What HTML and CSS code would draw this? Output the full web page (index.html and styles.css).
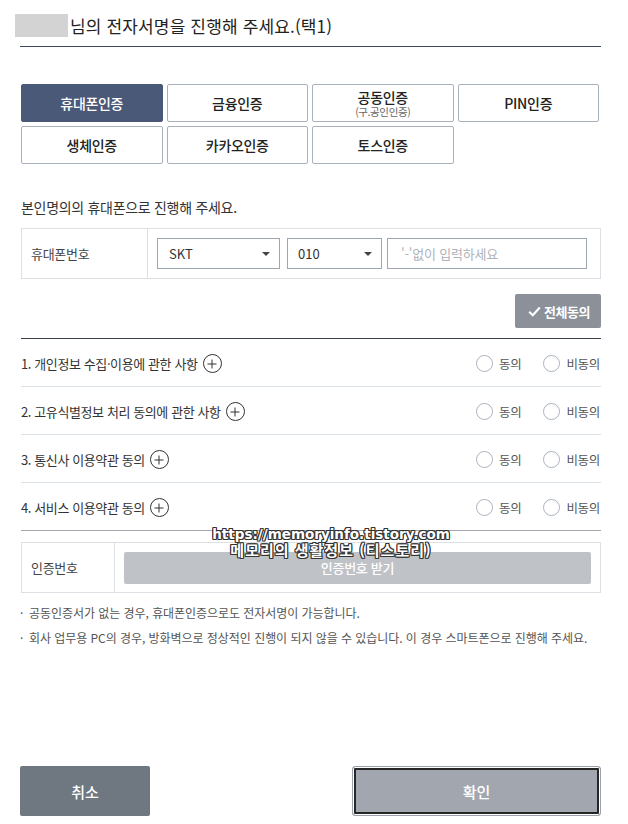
FILE: index.html
```html
<!DOCTYPE html>
<html lang="ko">
<head>
<meta charset="utf-8">
<link rel="stylesheet" href="styles.css">
</head>
<body>
<div class="page">
  <div class="header">
    <span class="mask"></span>
    <h1 class="title">님의 전자서명을 진행해 주세요.(택1)</h1>
  </div>
  <div class="rule"></div>

  <div class="content">
    <div class="tabs">
      <button class="tab active">휴대폰인증</button>
      <button class="tab">금융인증</button>
      <button class="tab two"><span>공동인증</span><small>(구.공인인증)</small></button>
      <button class="tab">PIN인증</button>
      <button class="tab">생체인증</button>
      <button class="tab">카카오인증</button>
      <button class="tab">토스인증</button>
    </div>

    <p class="guide">본인명의의 휴대폰으로 진행해 주세요.</p>

    <div class="phone-box">
      <div class="label">휴대폰번호</div>
      <div class="fields">
        <div class="select sel-carrier"><span>SKT</span><i class="caret"></i></div>
        <div class="select sel-prefix"><span>010</span><i class="caret"></i></div>
        <div class="input">'-'없이 입력하세요</div>
      </div>
    </div>

    <div class="agree-all-row">
      <button class="agree-all">
        <svg width="13" height="11" viewBox="0 0 13 11"><path d="M1.2 5.8 L4.8 9.2 L11.8 1.6" fill="none" stroke="#fff" stroke-width="2.2"/></svg>
        전체동의
      </button>
    </div>

    <div class="terms">
      <div class="term">
        <div class="term-name">1. 개인정보 수집·이용에 관한 사항<span class="plus"></span></div>
        <div class="choices"><span class="radio"></span><span class="opt">동의</span><span class="radio"></span><span class="opt">비동의</span></div>
      </div>
      <div class="term">
        <div class="term-name">2. 고유식별정보 처리 동의에 관한 사항<span class="plus"></span></div>
        <div class="choices"><span class="radio"></span><span class="opt">동의</span><span class="radio"></span><span class="opt">비동의</span></div>
      </div>
      <div class="term">
        <div class="term-name">3. 통신사 이용약관 동의<span class="plus"></span></div>
        <div class="choices"><span class="radio"></span><span class="opt">동의</span><span class="radio"></span><span class="opt">비동의</span></div>
      </div>
      <div class="term">
        <div class="term-name">4. 서비스 이용약관 동의<span class="plus"></span></div>
        <div class="choices"><span class="radio"></span><span class="opt">동의</span><span class="radio"></span><span class="opt">비동의</span></div>
      </div>
    </div>

    <div class="auth-box">
      <div class="label label-auth">인증번호</div>
      <div class="auth-cell"><button class="auth-btn">인증번호 받기</button></div>
    </div>

    <ul class="notes">
      <li>공동인증서가 없는 경우, 휴대폰인증으로도 전자서명이 가능합니다.</li>
      <li>회사 업무용 PC의 경우, 방화벽으로 정상적인 진행이 되지 않을 수 있습니다. 이 경우 스마트폰으로 진행해 주세요.</li>
    </ul>
  </div>

  <div class="footer">
    <button class="btn-cancel">취소</button>
    <button class="btn-ok">확인</button>
  </div>

  <div class="watermark">
    <div>https://memoryinfo.tistory.com</div>
    <div class="wm-ko">메모리의 생활정보 (티스토리)</div>
  </div>
</div>
</body>
</html>
```

FILE: styles.css
```css
* { box-sizing: border-box; }
html, body { margin: 0; padding: 0; background: #fff; }
body {
  font-family: "Noto Sans CJK KR", "Noto Sans", sans-serif;
  color: #222;
}
button { font-family: inherit; cursor: pointer; }

.page {
  position: relative;
  height: 824px;
  display: flex;
  flex-direction: column;
}

.header {
  display: flex;
  align-items: center;
  padding: 14px 0 0 15px;
  height: 37px;
}
.mask {
  display: block;
  width: 53px;
  height: 23px;
  background: #d3d3d3;
}
.title {
  margin: 0 0 0 2px;
  font-size: 17px;
  font-weight: 400;
  letter-spacing: 0.15px;
  color: #222;
  line-height: 23px;
}
.rule {
  margin: 9px 27px 0 20px;
  border-top: 1px solid #3c4560;
}

.content {
  padding: 0 27px 0 21px;
}

.tabs {
  margin-top: 37px;
  display: grid;
  grid-template-columns: repeat(4, 141.5px);
  grid-auto-rows: 38px;
  column-gap: 4px;
  row-gap: 4px;
}
.tab {
  border: 1px solid #a8b1bb;
  border-radius: 2px;
  background: #fff;
  color: #222;
  font-size: 14px;
  font-weight: 500;
  letter-spacing: -0.3px;
  padding: 0;
  display: flex;
  flex-direction: column;
  align-items: center;
  justify-content: center;
}
.tab.active {
  background: #4b5979;
  border-color: #4b5979;
  color: #fff;
}
.tab.two span { display: block; line-height: 15px; height: 15px; margin-top: 1px; }
.tab.two small {
  display: block;
  font-size: 10.5px;
  color: #666;
  line-height: 12px;
  height: 12px;
  margin-top: 1px;
  font-weight: 400;
  letter-spacing: -0.4px;
}

.guide {
  margin: 33px 0 0 0;
  font-size: 14px;
  line-height: 20px;
  color: #333;
  letter-spacing: -0.3px;
}

.phone-box, .auth-box {
  display: flex;
  border: 1px solid #dcdfe4;
  height: 51px;
}
.phone-box { margin-top: 11px; }
.label {
  width: 126px;
  border-right: 1px solid #dcdfe4;
  display: flex;
  align-items: center;
  padding-left: 9px;
  font-size: 13px;
  color: #444;
  letter-spacing: -0.3px;
}
.fields {
  display: flex;
  align-items: center;
  padding-left: 9px;
}
.select, .input {
  height: 31px;
  border: 1px solid #9ea7b1;
  display: flex;
  align-items: center;
  font-size: 13px;
  color: #333;
}
.select {
  justify-content: space-between;
  padding: 0 8px 0 11px;
}
.sel-carrier { width: 123px; }
.sel-prefix { width: 95px; margin-left: 7px; padding-left: 10px; }
.caret {
  width: 0;
  height: 0;
  border-left: 4px solid transparent;
  border-right: 4px solid transparent;
  border-top: 4px solid #444;
  margin-right: 1px;
}
.input {
  width: 200px;
  margin-left: 5px;
  padding-left: 13px;
  color: #aeb3b8;
  letter-spacing: -0.2px;
}

.agree-all-row {
  display: flex;
  justify-content: flex-end;
  margin-top: 15px;
}
.agree-all {
  width: 86px;
  height: 34px;
  border: none;
  border-radius: 2px;
  background: #8b9099;
  color: #fff;
  font-size: 13px;
  font-weight: 700;
  letter-spacing: -0.4px;
  display: flex;
  align-items: center;
  justify-content: center;
  gap: 3px;
  padding: 0 0 0 2px;
}

.terms {
  margin-top: 10px;
  border-top: 1px solid #3a3f4c;
  border-bottom: 1px solid #a3a8ae;
}
.term {
  height: 48px;
  display: flex;
  align-items: center;
  justify-content: space-between;
  border-top: 1px solid #dbe1e8;
}
.term:first-child { border-top: none; height: 47px; }
.term-name {
  display: flex;
  align-items: center;
  font-size: 13px;
  color: #333;
  letter-spacing: -0.4px;
  padding-top: 2px;
}
.plus {
  position: relative;
  width: 19px;
  height: 19px;
  margin-left: 5px;
  border: 1px solid #333;
  border-radius: 50%;
}
.plus::before, .plus::after {
  content: "";
  position: absolute;
  background: #333;
  left: 50%;
  top: 50%;
}
.plus::before { width: 9px; height: 1px; transform: translate(-50%, -50%); }
.plus::after { width: 1px; height: 9px; transform: translate(-50%, -50%); }

.choices {
  display: flex;
  align-items: center;
  padding-top: 2px;
}
.radio {
  width: 17px;
  height: 17px;
  border: 1px solid #a9b2bc;
  border-radius: 50%;
  margin-right: 6px;
}
.opt {
  font-size: 12.5px;
  color: #555;
  letter-spacing: -0.3px;
}
.opt:nth-child(2) { margin-right: 22px; }
.opt:last-child { margin-right: 1px; }

.auth-box { margin-top: 11px; }
.label-auth { width: 93px; }
.auth-cell {
  flex: 1;
  display: flex;
  align-items: center;
  padding: 0 9px 0 9px;
}
.auth-btn {
  width: 100%;
  height: 32px;
  border: none;
  border-radius: 2px;
  background: #bfc2c7;
  color: #fff;
  font-size: 13px;
  font-weight: 500;
  letter-spacing: -0.3px;
}

.notes {
  list-style: none;
  margin: 7px 0 0 0;
  padding: 0;
}
.notes li {
  position: relative;
  padding-left: 9px;
  font-size: 12px;
  line-height: 25px;
  color: #555;
  letter-spacing: -0.05px;
  margin-left: -1px;
}
.notes li::before {
  content: "·";
  position: absolute;
  left: 0;
  top: 0;
}

.footer {
  margin-top: auto;
  margin-bottom: 8px;
  display: flex;
  justify-content: space-between;
  padding: 0 27px 0 20px;
}
.btn-cancel, .btn-ok {
  height: 50px;
  border-radius: 2px;
  color: #fff;
  font-size: 15px;
  font-weight: 500;
}
.btn-cancel {
  width: 130px;
  border: none;
  background: #6f7780;
}
.btn-ok {
  width: 249px;
  background: #a2a6af;
  border: 1px solid #9ba1aa;
  border-radius: 3px;
  box-shadow: inset 0 0 0 1px #fff, inset 0 0 0 3px #262626;
}

.watermark {
  position: absolute;
  left: 0;
  right: 0;
  top: 526px;
  text-align: center;
  font-family: "DejaVu Sans", sans-serif;
  font-weight: 700;
  font-size: 13.5px;
  line-height: 16px;
  color: #fff;
  padding-left: 34px;
  text-shadow: -1px -1px 0 #333, 1px -1px 0 #333, -1px 1px 0 #333, 1px 1px 0 #333, 0 1px 0 #333, 0 -1px 0 #333, 1px 0 0 #333, -1px 0 0 #333;
  pointer-events: none;
}
.wm-ko {
  font-family: "Noto Sans CJK KR", sans-serif;
  font-size: 15px;
  letter-spacing: 1px;
}
```
